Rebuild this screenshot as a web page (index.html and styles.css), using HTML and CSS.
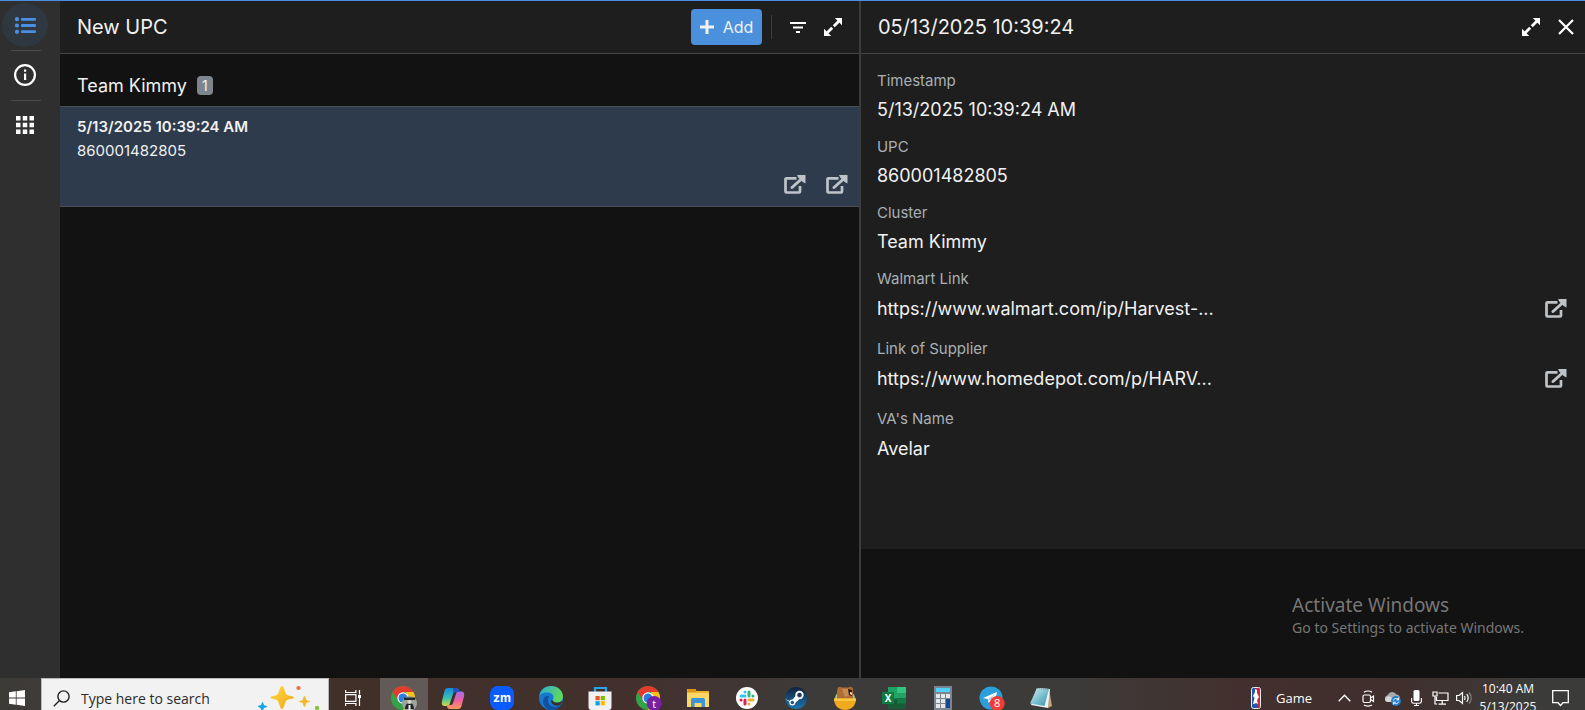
FILE: index.html
```html
<!DOCTYPE html>
<html lang="en">
<head>
    <meta charset="utf-8">
    <title>New UPC</title>
    <link rel="stylesheet" href="styles.css">
</head>
<body>
    <!-- Shared icons -->
    <svg class="defs" width="0" height="0" aria-hidden="true">
        <symbol id="i-open" viewBox="0 0 22 20">
            <path d="M12.500 3.300H2.400a.9.9 0 0 0-.9.9v12.400c0 .5.4.9.9.9h12.700a.9.9 0 0 0 .9-.9V11" fill="none" stroke="currentColor" stroke-width="2.700"/>
            <path d="M8 12.500L18 3.500" stroke="currentColor" stroke-width="3" stroke-linecap="round"/>
            <path d="M13 0h8.500v8.500l-2.800-1.500-4.300-4.200z" fill="currentColor"/>
        </symbol>
        <symbol id="i-expand" viewBox="0 0 20 20">
            <path d="M19 1v7.200L11.800 1zM1 19v-7.200L8.200 19z" fill="currentColor"/>
            <path d="M16 4l-5.200 5.200M9.200 10.800L4 16" stroke="currentColor" stroke-width="2.800"/>
        </symbol>
    </svg>

    <div class="app">
        <nav class="sidebar">
            <button class="nav-btn active" aria-label="List">
                <svg width="21" height="17" viewBox="0 0 21 17" fill="currentColor"><circle cx="2" cy="2.200" r="2.100"/><circle cx="2" cy="8.500" r="2.100"/><circle cx="2" cy="14.800" r="2.100"/><rect x="6" y="1" width="15" height="2.800" rx="1"/><rect x="6" y="7.100" width="15" height="2.800" rx="1"/><rect x="6" y="13.200" width="15" height="2.800" rx="1"/></svg>
            </button>
            <hr>
            <button class="nav-btn" aria-label="Info">
                <svg width="22" height="22" viewBox="0 0 22 22"><circle cx="11" cy="11" r="9.900" fill="none" stroke="currentColor" stroke-width="2.200"/><path d="M10 9.500h2.200V16H10zM10 5.500h2.200v2.200H10z" fill="currentColor"/></svg>
            </button>
            <hr>
            <button class="nav-btn" aria-label="Apps">
                <svg width="18" height="18" viewBox="0 0 18 18" fill="currentColor"><path d="M0 0h4.500v4.500H0zM6.750 0h4.500v4.500h-4.500zM13.500 0H18v4.500h-4.500zM0 6.750h4.500v4.500H0zM6.750 6.750h4.500v4.500h-4.500zM13.500 6.750H18v4.500h-4.500zM0 13.500h4.500V18H0zM6.750 13.500h4.500V18h-4.500zM13.500 13.500H18V18h-4.500z"/></svg>
            </button>
        </nav>

        <main class="list-pane">
            <header class="pane-header">
                <h1>New UPC</h1>
                <button class="add-btn">
                    <svg width="14" height="14" viewBox="0 0 14 14"><path d="M7 0v14M0 7h14" stroke="currentColor" stroke-width="3"/></svg>
                    Add
                </button>
                <span class="separator"></span>
                <button class="icon-btn" aria-label="Filter">
                    <svg width="16" height="11" viewBox="0 0 16 11"><path d="M0 1h16M3 5.500h10M6 10h4" stroke="currentColor" stroke-width="1.800"/></svg>
                </button>
                <button class="icon-btn" aria-label="Expand"><svg width="20" height="20"><use href="#i-expand"/></svg></button>
            </header>
            <div class="group">
                <h2>Team Kimmy</h2>
                <span class="badge">1</span>
            </div>
            <article class="row">
                <h3>5/13/2025 10:39:24 AM</h3>
                <p>860001482805</p>
                <div class="row-actions">
                    <button class="open-btn" aria-label="Open Walmart link"><svg width="22" height="20"><use href="#i-open"/></svg></button>
                    <button class="open-btn" aria-label="Open supplier link"><svg width="22" height="20"><use href="#i-open"/></svg></button>
                </div>
            </article>
        </main>

        <section class="detail-pane">
            <header class="pane-header">
                <h1>05/13/2025 10:39:24</h1>
                <button class="icon-btn" aria-label="Expand"><svg width="20" height="20"><use href="#i-expand"/></svg></button>
                <button class="icon-btn" aria-label="Close">
                    <svg width="16" height="16" viewBox="0 0 16 16"><path d="M1 1l14 14M15 1L1 15" stroke="currentColor" stroke-width="2.200"/></svg>
                </button>
            </header>
            <dl class="fields">
                <div class="field"><dt>Timestamp</dt><dd>5/13/2025 10:39:24 AM</dd></div>
                <div class="field"><dt>UPC</dt><dd>860001482805</dd></div>
                <div class="field"><dt>Cluster</dt><dd>Team Kimmy</dd></div>
                <div class="field link">
                    <dt>Walmart Link</dt>
                    <dd><a href="#walmart">https://www.walmart.com/ip/Harvest-...</a>
                        <button class="open-btn" aria-label="Open Walmart link"><svg width="22" height="20"><use href="#i-open"/></svg></button></dd>
                </div>
                <div class="field link">
                    <dt>Link of Supplier</dt>
                    <dd><a href="#supplier">https://www.homedepot.com/p/HARV...</a>
                        <button class="open-btn" aria-label="Open supplier link"><svg width="22" height="20"><use href="#i-open"/></svg></button></dd>
                </div>
                <div class="field link"><dt>VA's Name</dt><dd>Avelar</dd></div>
            </dl>
        </section>

        <div class="watermark">
            <p class="watermark-title">Activate Windows</p>
            <p>Go to Settings to activate Windows.</p>
        </div>
    </div>

    <footer class="taskbar">
        <button class="start" aria-label="Start">
            <svg width="16" height="16" viewBox="0 0 16 16" fill="#fff"><path d="M0 2.300l6.800-1v6.300H0zM7.600 1.200L16 0v7.600H7.600zM0 8.400h6.800v6.300l-6.800-1zM7.600 8.400H16V16l-8.400-1.200z"/></svg>
        </button>
        <label class="search">
            <svg width="17" height="17" viewBox="0 0 17 17" fill="none" stroke="#222" stroke-width="1.400"><circle cx="10.500" cy="6.500" r="5.600"/><path d="M6.500 10.500L.8 16.200"/></svg>
            <input type="text" placeholder="Type here to search" aria-label="Search">
            <svg class="sparkles" width="62" height="26" viewBox="0 0 62 26">
                <defs><linearGradient id="gold" x1="0" y1="0" x2="1" y2="1"><stop offset="0" stop-color="#ffdc3c"/><stop offset="1" stop-color="#f0a51c"/></linearGradient></defs>
                <path d="M24 1c2 0 3 7 4.500 8.500S36 11 36 12.500s-6 1.500-7.500 3S26 24 24 24s-3-7-4.500-8.500-7-1.500-7-3 5.500-1.500 7-3S22 1 24 1z" fill="url(#gold)"/>
                <path d="M46.500 11c1 0 1.400 3.200 2 4s3.500.7 3.500 1.500-2.900.8-3.500 1.500-1 4-2 4-1.400-3.300-2-4-3.500-.7-3.500-1.500 2.900-.8 3.500-1.500 1-4 2-4z" fill="#f6b72b"/>
                <path d="M4.500 17c1 0 1 2.800 1.700 3.300s3 .2 3 1.200-2.400 1-3 1.600S5 26 4 26s-1-2.500-1.500-3S0 22.200 0 21.200s2.300-.6 3-1.200S3.800 17 4.500 17z" fill="#18a5e8"/>
                <circle cx="40.500" cy="3" r="2.100" fill="#ee6b32"/><circle cx="59" cy="23" r="2.200" fill="#83c441"/>
            </svg>
        </label>

        <div class="apps">
            <button class="task task-view" aria-label="Task View">
                <svg width="16" height="16" viewBox="0 0 16 16" fill="none" stroke="#fff" stroke-width="1.200"><path d="M.6 0v2.500h10.300V0M.6 16v-2.500h10.300V16M.6 4.600h10.300v6.800H.6zM14.500 0v4.500M14.500 8v8"/><path d="M13 5h3v3h-3z" fill="#fff" stroke="none"/></svg>
            </button>
            <button class="task current" aria-label="Chrome">
                <svg width="26" height="26" viewBox="0 0 26 26"><circle cx="12" cy="13" r="12" fill="#34a346"/><path d="M1.600 7A12 12 0 0 1 22.400 7H12L7 15z" fill="#e33b2e"/><path d="M22.400 7A12 12 0 0 1 12 25l5-9-2-9z" fill="#fbc116"/><circle cx="12" cy="13" r="5.700" fill="#fff"/><circle cx="12" cy="13" r="4.500" fill="#2a7de1"/><circle cx="18.500" cy="18.500" r="7.500" fill="#9aa59d"/><path d="M14 24c0-4 2-6 4.500-6s4.500 2 4.500 6z" fill="#202326"/><path d="M13 12.500h11v2.500H13z" fill="#262b2c"/><circle cx="18.500" cy="17" r="2" fill="#ddd2c8"/><path d="M17.500 20h2v6h-2z" fill="#eee"/></svg>
            </button>
            <button class="task" aria-label="Copilot">
                <svg width="24" height="24" viewBox="0 0 24 24"><defs><linearGradient id="cpA" x1="0" y1="0" x2="0" y2="1"><stop offset="0" stop-color="#1a86df"/><stop offset=".55" stop-color="#38c0b3"/><stop offset="1" stop-color="#d3dc36"/></linearGradient><linearGradient id="cpB" x1="0" y1="0" x2="0" y2="1"><stop offset="0" stop-color="#a36cf0"/><stop offset=".5" stop-color="#ee5fa5"/><stop offset="1" stop-color="#fb9a58"/></linearGradient></defs>
                    <path d="M7 2h8c2.500 0 3 2 3.600 4h-4.200c-1.600 0-2.200 1-2.600 2.500L9 17c-.5 2-1.300 3-3 3H4c-3 0-3.600-2-3-5L3.500 5C4 3 5 2 7 2z" fill="url(#cpA)"/>
                    <path d="M17 23H9c-2.500 0-3-2-3.600-4h4.200c1.600 0 2.200-1 2.600-2.500L15 8c.5-2 1.300-2.500 3-2.500h2c3 0 3.600 2 3 5L20.500 20c-.5 2-1.500 3-3.500 3z" fill="url(#cpB)"/>
                    <path d="M12 2h3c2.500 0 3 2 3.600 4h-4.200c-1 0-1.600.3-2 1z" fill="#2152bf"/></svg>
            </button>
            <button class="task" aria-label="Zoom">
                <span class="zoom-logo">zm</span>
            </button>
            <button class="task" aria-label="Edge">
                <svg width="24" height="24" viewBox="0 0 24 24"><defs><linearGradient id="edA" x1="0" y1="0" x2="1" y2=".3"><stop offset="0" stop-color="#2aa8e0"/><stop offset="1" stop-color="#5fd95a"/></linearGradient></defs><circle cx="12" cy="12" r="12" fill="#1678cf"/><path d="M.2 10C1 4 6 0 12 0c7 0 12 5 12 10.500 0 4-3 6-6 6-2.700 0-4.500-1-4.500-2.200 0-1 1-1.300 1-3.300 0-2.500-2.500-4.500-6-4.500C4.500 6.500 1.200 8 .2 10z" fill="url(#edA)"/><path d="M10 10.500c-3 4 0 10.500 6 10.500 2.500 0 4.500-.7 6-2-2.500 4-6.500 5.500-11 4.800C5 22 2.500 16 5 12c1.500-2 4-2.500 5-1.500z" fill="#114f9f"/><path d="M13.500 14.300c.5 1.700 2.500 2.400 4.500 2.400 2.500 0 4-.8 5-2-.2 2-1 3.500-1.800 4.300-3 1.500-8 .5-9-3.200-.3-1.800.5-2 1.300-1.500z" fill="#38302e"/></svg>
            </button>
            <button class="task" aria-label="Microsoft Store">
                <svg width="24" height="24" viewBox="0 0 24 24"><path d="M7 7V2h11v5" fill="none" stroke="#27a5e8" stroke-width="2.200"/><path d="M.5 5.500h23V21a3 3 0 0 1-3 3h-17a3 3 0 0 1-3-3z" fill="#f1f1f1"/><path d="M7.500 10h4.200v4.200H7.500z" fill="#f05125"/><path d="M12.700 10h4.200v4.200h-4.200z" fill="#7fbb00"/><path d="M7.500 15.200h4.200v4.200H7.500z" fill="#00a3ee"/><path d="M12.700 15.200h4.200v4.200h-4.200z" fill="#feb900"/></svg>
            </button>
            <button class="task" aria-label="Chrome, profile t">
                <svg width="26" height="26" viewBox="0 0 26 26"><circle cx="12" cy="13" r="12" fill="#34a346"/><path d="M1.600 7A12 12 0 0 1 22.400 7H12L7 15z" fill="#e33b2e"/><path d="M22.400 7A12 12 0 0 1 12 25l5-9-2-9z" fill="#fbc116"/><circle cx="12" cy="13" r="5.700" fill="#fff"/><circle cx="12" cy="13" r="4.500" fill="#2a7de1"/><circle cx="18.200" cy="18.500" r="7.500" fill="#7720a3"/><text x="18.200" y="22.500" class="profile" text-anchor="middle">t</text></svg>
            </button>
            <button class="task" aria-label="File Explorer">
                <svg width="22" height="20" viewBox="0 0 22 20"><path d="M0 1h8l1.500 2H22v16H0z" fill="#f0b52d"/><path d="M1 1h8v3H0z" fill="#dd9519"/><path d="M0 5h22v14H0z" fill="#ffd766"/><path d="M4 12c0-1.500 1-2 2-2h10c1 0 2 .5 2 2v7h-3.500v-4h-7v4H4z" fill="#3b93d8"/></svg>
            </button>
            <button class="task" aria-label="Slack">
                <svg width="22" height="22" viewBox="0 0 22 22"><circle cx="11" cy="11" r="11" fill="#fff"/><g fill="none" stroke-width="3" stroke-linecap="round"><path d="M9 5v.1M5 9h4" stroke="#36c5f0"/><path d="M13 5v4M17 9h-.1" stroke="#2eb67d"/><path d="M17 13h-4M13 17v-.1" stroke="#ecb22e"/><path d="M9 17v-4M5 13h.1" stroke="#e01e5a"/></g></svg>
            </button>
            <button class="task" aria-label="Steam">
                <svg width="22" height="22" viewBox="0 0 22 22"><defs><linearGradient id="stm" x1="0" y1="0" x2="0" y2="1"><stop offset="0" stop-color="#14203c"/><stop offset="1" stop-color="#1a78b0"/></linearGradient></defs><circle cx="11" cy="11" r="11" fill="url(#stm)"/><path d="M0 12l6 2.500 5-6 3 4-5.500 5z" fill="#fff"/><circle cx="14.500" cy="8" r="4.200" fill="#fff"/><circle cx="14.500" cy="8" r="2.600" fill="#233555" stroke="#fff" stroke-width=".6"/><circle cx="7.300" cy="15.500" r="3" fill="#fff"/><circle cx="7.300" cy="15.500" r="1.700" fill="#1b5687"/></svg>
            </button>
            <button class="task" aria-label="Bear">
                <svg width="22" height="24" viewBox="0 0 22 24"><path d="M1 13c0-5 3-8 10-8s10 3 10 8z" fill="#a9c98a"/><path d="M3 13V6c0-1 0-2 .5-3C4 1 6 0 7.500 1.500h7C16 0 18.500 1 19 3v10z" fill="#ad6d35"/><path d="M8 3h6l2 6-5 2z" fill="#c98b4e"/><path d="M14 3l4 1v6l-3-1z" fill="#27191a"/><path d="M16 6l2 .5V9l-2-.8z" fill="#e9e1dc"/><path d="M0 12.500h22C22 19 18 24 11 24S0 19 0 12.500z" fill="#f0aa1e"/><path d="M0 12.500h22v2.500H0z" fill="#fcc944"/></svg>
            </button>
            <button class="task" aria-label="Excel">
                <svg width="24" height="22" viewBox="0 0 24 22"><path d="M6 0h9v22H6z" fill="#21a366"/><path d="M15 0h9v6h-9z" fill="#33c481"/><path d="M15 6h9v5.500h-9z" fill="#21a366"/><path d="M6 11.500h18V22H6z" fill="#185c37"/><path d="M15 11.500h9v5h-9z" fill="#107c41"/><path d="M0 5h12v12H0z" fill="#107c41"/><text x="6" y="15" class="excel-x" text-anchor="middle">X</text></svg>
            </button>
            <button class="task" aria-label="Calculator">
                <svg width="18" height="24" viewBox="0 0 18 24"><path d="M0 0h18v24H0z" fill="#7b8692"/><path d="M2 2h14v4H2z" fill="#4fd1fa"/><path d="M2 8h4v4H2zM7 8h4v4H7zM12 8h4v4h-4zM2 13h4v4H2zM7 13h4v4H7zM2 18h4v4H2zM7 18h4v4H7z" fill="#e4e6e8"/><path d="M12 13h4v9h-4z" fill="#17488f"/></svg>
            </button>
            <button class="task" aria-label="Telegram">
                <svg width="26" height="26" viewBox="0 0 26 26"><circle cx="12" cy="13" r="11.500" fill="#2a9fdb"/><path d="M4 13l14-6-2.500 12-4-3-2 2-.5-3.800z" fill="#fff"/><path d="M9 14.200L16 9l-5 6.500z" fill="#a9cfe6"/><circle cx="18.200" cy="18.500" r="7.500" fill="#f23c34"/><text x="18.200" y="22" class="count" text-anchor="middle">8</text></svg>
            </button>
            <button class="task" aria-label="Notepad">
                <svg width="24" height="22" viewBox="0 0 24 22"><defs><linearGradient id="note" x1="0" y1="0" x2="1" y2="1"><stop offset="0" stop-color="#d7f1f5"/><stop offset=".6" stop-color="#6fb9c9"/><stop offset="1" stop-color="#3f8fa5"/></linearGradient></defs><path d="M20 2l3 17-4 2z" fill="#c3a676"/><path d="M8 1l13 1-2 19-17-3z" fill="#eef2f2"/><path d="M8 1l12 1-4.500 17L1 16.500z" fill="url(#note)"/><path d="M8 1.500l12 1" stroke="#888" stroke-dasharray="1 1"/></svg>
            </button>
        </div>

        <button class="news">
            <svg width="10" height="22" viewBox="0 0 10 22"><rect x=".5" y=".5" width="9" height="21" rx="2" fill="#1d5aa8" stroke="#eee"/><path d="M5 1h2.500A1.500 1.500 0 0 1 9 2.500v17A1.500 1.500 0 0 1 7.500 21H7L5 14z" fill="#d2263e"/><path d="M4 2l2 1v3l2 4-2 3 1 4-2-1-2 1H2l1.500-6L2 9l2-4z" fill="#fff"/></svg>
            Game
        </button>
        <div class="tray">
            <button aria-label="Show hidden icons"><svg width="13" height="8" viewBox="0 0 13 8" fill="none" stroke="#fff" stroke-width="1.400"><path d="M.7 7.300l5.800-6 5.800 6"/></svg></button>
            <button aria-label="Meet Now"><svg width="13" height="17" viewBox="0 0 13 17" fill="none" stroke="#fff" stroke-width="1.200"><rect x="1" y="5" width="7.500" height="7.500" rx="1.500"/><path d="M8.500 8l3-2v5.500l-3-2M2 2.200C4 .6 8 .6 10 2.200M2 15c2 1.400 6 1.400 8 0"/></svg></button>
            <button aria-label="OneDrive"><svg width="17" height="15" viewBox="0 0 17 15"><path d="M4 11a3.500 3.500 0 0 1-.5-6.800 5 5 0 0 1 9-.7A4 4 0 0 1 14 11z" fill="#a9a9a9"/><path d="M1 8c2-4 5-3 7-1l1 4H4C2 11 1 10 1 8z" fill="#d6d6d6"/><circle cx="12" cy="10" r="4.900" fill="#1f7bd0"/><path d="M9.300 9.500c.8-2.500 4-2.800 5.200-.7M14.700 10.600c-.8 2.500-4 2.800-5.200.7M14.600 6.500v2.400h-2.300M9.400 13.600v-2.400h2.300" fill="none" stroke="#fff"/></svg></button>
            <button aria-label="Microphone"><svg width="11" height="16" viewBox="0 0 11 16"><rect x="2.500" y="0" width="6" height="11" rx="1.500" fill="#fff"/><path d="M.6 8v3.500c0 1 .9 1.700 2 1.700h5.800c1.100 0 2-.7 2-1.700V8M5.500 13v3M3 15.500h5" fill="none" stroke="#fff" stroke-width="1.100"/></svg></button>
            <button aria-label="Network"><svg width="17" height="14" viewBox="0 0 17 14" fill="none" stroke="#fff" stroke-width="1.200"><path d="M6.500 2H16v7.500H4.500V6M10.200 9.500v3.500M6.500 13.200h7.500M1 1h4v4H1zM3 5v8h2"/></svg></button>
            <button aria-label="Volume"><svg width="17" height="14" viewBox="0 0 17 14" fill="none" stroke="#fff" stroke-width="1.200"><path d="M.6 4.500h2.500L6.500 1.500v11l-3.400-3H.6zM8.500 5c.8 1.200.8 2.800 0 4M10.700 3.200c1.800 2.300 1.800 5.300 0 7.600"/><path d="M13 1.500c2.800 3.300 2.800 7.700 0 11" stroke="#8b8887"/></svg></button>
        </div>
        <button class="clock"><span>10:40 AM</span><span>5/13/2025</span></button>
        <button class="notify" aria-label="Notifications"><svg width="17" height="17" viewBox="0 0 17 17" fill="none" stroke="#fff" stroke-width="1.300"><path d="M.7.700h15.600v12H11l-2.500 2.800-2.500-2.800H.7z"/></svg></button>
    </footer>
</body>
</html>
```

FILE: styles.css
```css
* { box-sizing: border-box; }
body {
    margin: 0;
    height: 100vh;
    display: flex;
    flex-direction: column;
    overflow: hidden;
    background: #121212;
    color: #f1f1f1;
    font-family: Inter, "Liberation Sans", sans-serif;
    font-size: 18px;
}
h1, h2, h3, p, dl, dd { margin: 0; font-weight: 400; }
button {
    display: flex;
    align-items: center;
    justify-content: center;
    padding: 0;
    border: none;
    background: none;
    color: inherit;
    font: inherit;
    cursor: pointer;
}
svg { flex: none; }
.defs { position: absolute; }

.app {
    position: relative;
    flex: 1;
    min-height: 0;
    display: flex;
    border-top: 1px solid #4a90e2;
}

/* Sidebar */
.sidebar {
    width: 60px;
    padding: 2px 10px 0 2px;
    background: #2f2f2f;
    color: #fff;
}
.sidebar hr {
    width: 30px;
    margin: 3px 9px 2px;
    border: none;
    border-top: 1px solid #4c4c4c;
}
.nav-btn {
    width: 46px;
    height: 44px;
    border-radius: 50%;
}
.nav-btn.active {
    background: #2f3740;
    color: #4a90e2;
}

/* Panes */
.list-pane { flex: 800; min-width: 0; }
.detail-pane {
    flex: 725;
    min-width: 0;
    border-left: 2px solid #3c3c3c;
}
.pane-header {
    display: flex;
    align-items: center;
    height: 53px;
    padding: 0 8px 0 17px;
    background: #1e1e1e;
    border-bottom: 1px solid #444;
}
.detail-pane .pane-header { padding-right: 2px; }
.pane-header h1 {
    flex: 1;
    font-size: 20px;
}
.add-btn {
    gap: 9px;
    width: 71px;
    height: 36px;
    border-radius: 4px;
    background: #4a90dc;
    font-size: 16px;
}
.separator {
    width: 1px;
    height: 24px;
    margin: 0 9px;
    background: #3c3c3c;
}
.icon-btn {
    width: 35px;
    height: 36px;
    color: #fff;
}

.group {
    display: flex;
    align-items: center;
    gap: 10px;
    height: 52px;
    padding: 10px 17px 0;
}
.group h2 { font-size: 18px; }
.badge {
    width: 16px;
    border-radius: 4px;
    background: #7f858d;
    font-size: 14px;
    line-height: 19px;
    text-align: center;
}
.row {
    padding: 8px 11px 11px 17px;
    background: #2d3b4c;
    border: 1px solid #4a4f55;
    border-width: 1px 0;
}
.row h3 {
    font-size: 15px;
    font-weight: 600;
    line-height: 24px;
}
.row p {
    font-size: 15px;
    line-height: 24px;
}
.row-actions {
    display: flex;
    justify-content: flex-end;
    gap: 20px;
    padding-top: 12px;
}
.open-btn { color: #bec3c8; }

/* Record fields */
.fields {
    height: 495px;
    padding: 17px 18px 0 16px;
    background: #1e1e1e;
}
.field { margin-bottom: 14px; }
.field dt {
    margin-bottom: 6px;
    color: #a9b0b5;
    font-size: 15px;
    line-height: 20px;
}
.field dd {
    display: flex;
    align-items: center;
    justify-content: space-between;
    line-height: 26px;
}
.field.link dt { margin-bottom: 5px; }
.field.link dd { margin-bottom: 15px; line-height: 30px; }
.field a {
    color: inherit;
    text-decoration: none;
}

.watermark {
    position: absolute;
    right: 61px;
    bottom: 40px;
    color: #777;
    font-family: "Noto Sans", sans-serif;
    font-size: 14px;
    line-height: 20px;
}
.watermark-title {
    font-size: 19px;
    line-height: 26px;
}

/* Taskbar, its lower edge runs off the screen */
.taskbar {
    flex: none;
    display: flex;
    align-items: flex-start;
    height: 32px;
    overflow: hidden;
    padding-right: 5px;
    background: linear-gradient(90deg, #3d3b37 0, #3e3b38 3%, #403029 21%, #43302d 40%, #3d3b39 51%, #3c3b39 68%, #43302e 78%, #402f2d 88%, #3b3c3a 97%);
    color: #fff;
    font-family: "Open Sans", sans-serif;
}
.taskbar button, .search { height: 40px; }
.start { width: 41px; padding-right: 7px; }
.search {
    display: flex;
    align-items: center;
    width: 288px;
    padding: 0 8px 0 11px;
    border: 1px solid #b9b9b9;
    background: #f2f2f2;
}
.search input {
    flex: 1;
    min-width: 0;
    margin-left: 11px;
    padding: 0;
    border: none;
    outline: none;
    background: none;
    font: 14px "Open Sans", sans-serif;
}
.search input::placeholder { color: #2b2b2b; opacity: 1; }
.apps {
    flex: 1;
    display: flex;
    gap: 1px;
}
.task { width: 48px; }
.task-view { margin-right: 2px; }
.task.current { background: #615a56; }
.zoom-logo {
    width: 24px;
    border-radius: 8px;
    background: #0b5cff;
    font: bold 12px/24px Inter, sans-serif;
    text-align: center;
}
.profile { fill: #fff; font-size: 11px; }
.excel-x { fill: #fff; font-size: 10px; font-weight: bold; }
.count { fill: #fff; font-size: 11px; }
.taskbar .news {
    gap: 15px;
    margin-right: 20px;
    font-size: 13px;
}
.tray { display: flex; }
.tray button { width: 24px; }
.taskbar .clock {
    flex-direction: column;
    width: 64px;
    font-size: 12px;
    line-height: 18px;
}
.notify { width: 40px; }
```
